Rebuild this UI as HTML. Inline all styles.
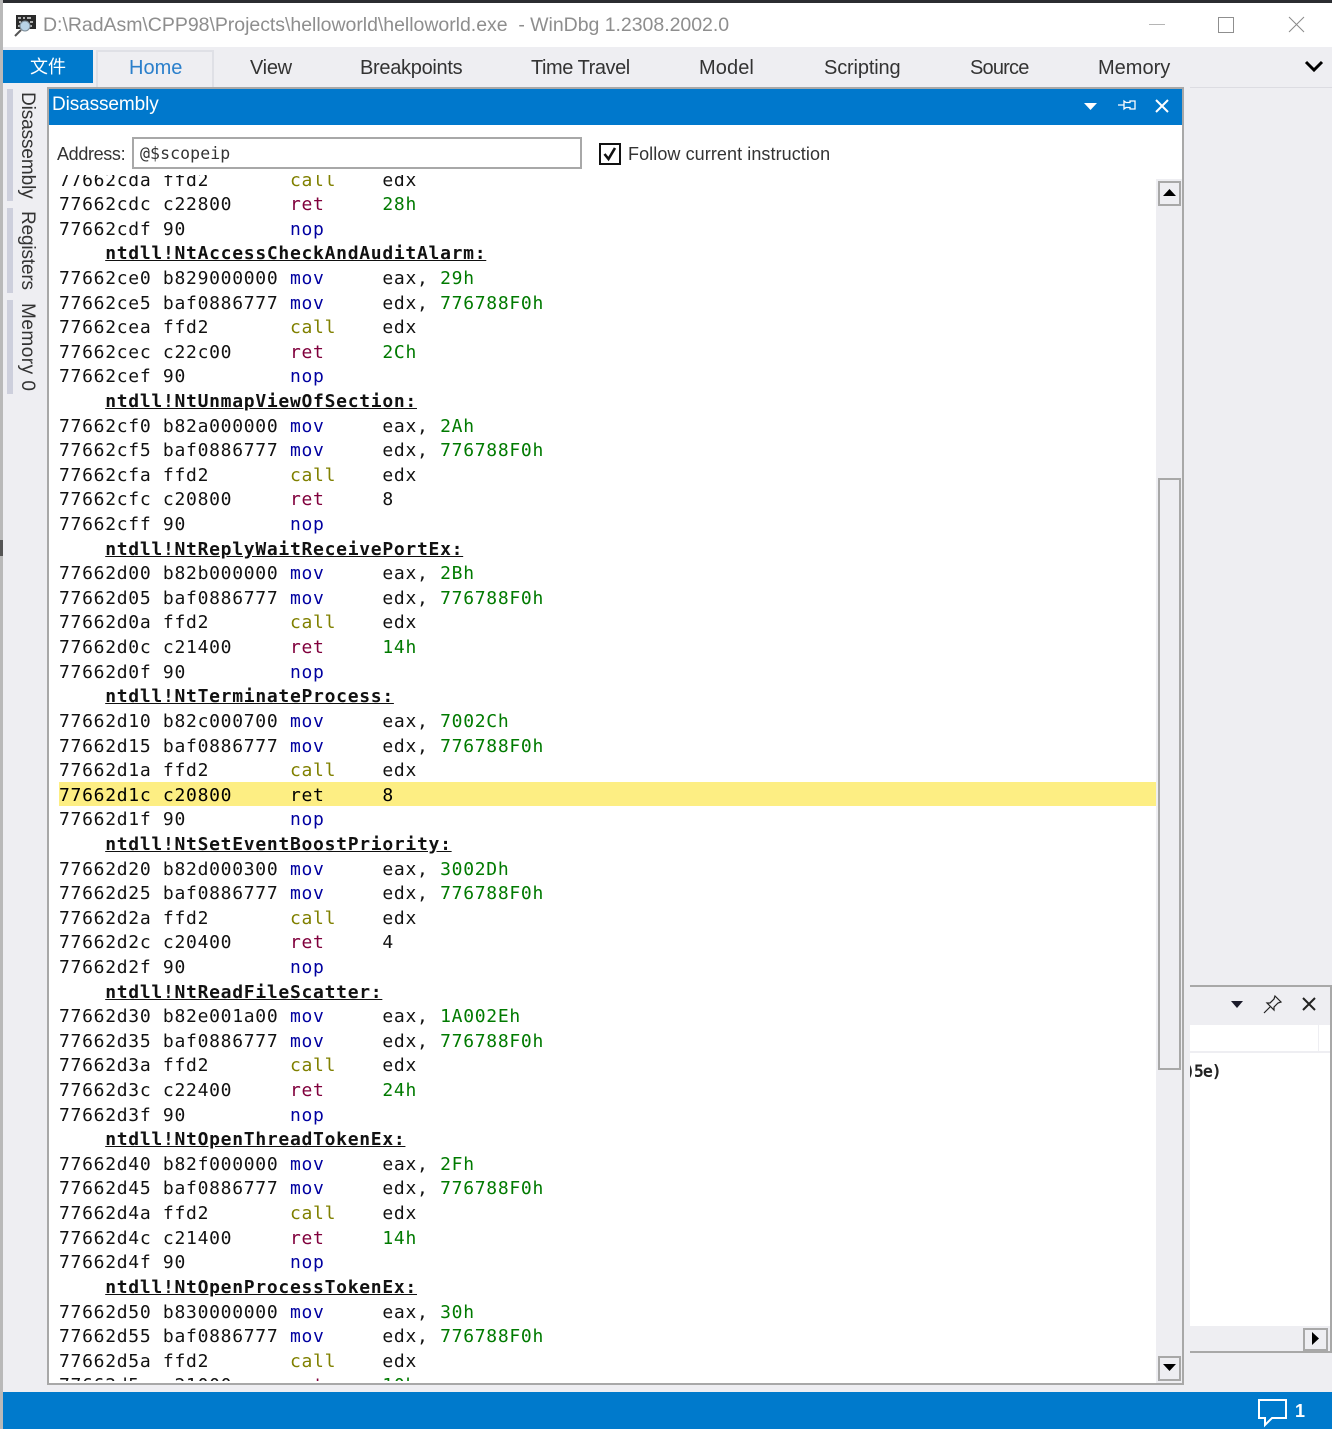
<!DOCTYPE html>
<html><head><meta charset="utf-8"><style>
html,body{margin:0;padding:0;background:#eeeef2}
body{width:1332px;height:1429px;position:relative;overflow:hidden;font-family:"Liberation Sans","Noto Sans CJK SC",sans-serif;color:#2b2b33}
.a{position:absolute;white-space:pre}
.t{font-size:20px;line-height:26px;top:55px;color:#333}
#code{position:absolute;left:49px;top:175px;width:1108px;height:1206px;overflow:hidden;background:#fff}
#in{position:absolute;left:10px;top:-6.5px;width:1098px;font:18px/24.62px "DejaVu Sans Mono",monospace;letter-spacing:.71px;color:#111}
#hl{position:absolute;left:10px;top:607px;width:1098px;height:24px;background:#fdee83}
#in div{height:24.62px;white-space:pre}
#in b{text-decoration:underline;color:#111}
.m{color:#0000a0}.c{color:#808000}.r{color:#80003c}.g{color:#007a00}
.v{writing-mode:vertical-rl;font-size:19px;color:#333;left:16px;line-height:22px}
.vb{position:absolute;left:7px;width:6px;background:#cdcfdc}
</style></head><body>
<div class="a" style="left:0;top:0;width:1332px;height:3px;background:#2b2d31"></div>
<div class="a" style="left:0;top:0;width:3px;height:1429px;background:#b9b9b9"></div>
<div class="a" style="left:0;top:540px;width:3px;height:16px;background:#555"></div>
<div class="a" style="left:3px;top:3px;width:1329px;height:44px;background:#fff"></div>
<svg class="a" style="left:14px;top:14px" width="24" height="24" viewBox="0 0 24 24"><rect x="2" y="1" width="20" height="14" fill="#2a2a2a"/><path d="M4 4h3M9 4h2M13 4h4M5 8h2M10 8h4M16 8h3M4 12h4M10 12h2M14 12h4" stroke="#ddd" stroke-width="1.5"/><circle cx="11" cy="12" r="5" fill="#b9d3e6" stroke="#7c8b96"/><path d="M7 16L1 22" stroke="#555" stroke-width="2"/></svg>
<div class="a" style="left:43px;top:12px;font-size:19.5px;line-height:26px;color:#8e8e8e;letter-spacing:-.03px">D:\RadAsm\CPP98\Projects\helloworld\helloworld.exe&nbsp; - WinDbg 1.2308.2002.0</div>
<div class="a" style="left:1149px;top:24px;width:16px;height:1px;background:#b5b5b5"></div>
<div class="a" style="left:1218px;top:17px;width:14px;height:14px;border:1px solid #8f8f8f"></div>
<svg class="a" style="left:1288px;top:16px" width="17" height="17"><path d="M1 1L16 16M16 1L1 16" stroke="#8a8a8a" fill="none"/></svg>

<div class="a" style="left:3px;top:50px;width:90px;height:33px;background:#007acc;color:#fff;font-size:18px;line-height:34px;text-align:center">文件</div>
<div class="a" style="left:96px;top:50px;width:114px;height:37px;border:2px solid #dfe0e6;border-bottom:0"></div>
<div class="a t" style="left:129px;color:#2a7fcb">Home</div>
<div class="a t" style="left:250px;letter-spacing:-.3px">View</div>
<div class="a t" style="left:360px;letter-spacing:-.3px">Breakpoints</div>
<div class="a t" style="left:531px;letter-spacing:-.45px">Time Travel</div>
<div class="a t" style="left:699px;letter-spacing:.1px">Model</div>
<div class="a t" style="left:824px;letter-spacing:-.15px">Scripting</div>
<div class="a t" style="left:970px;letter-spacing:-.8px">Source</div>
<div class="a t" style="left:1098px">Memory</div>
<svg class="a" style="left:1304px;top:60px" width="20" height="14"><path d="M2 2L10 10L18 2" stroke="#000" stroke-width="3" fill="none"/></svg>
<div class="a" style="left:1190px;top:87px;width:142px;height:1px;background:#dcdce2"></div>

<div class="vb" style="top:89px;height:112px"></div>
<div class="vb" style="top:208px;height:85px"></div>
<div class="vb" style="top:300px;height:94px"></div>
<div class="a v" style="top:92px;letter-spacing:-.1px">Disassembly</div>
<div class="a v" style="top:211px;letter-spacing:-.15px">Registers</div>
<div class="a v" style="top:303px;letter-spacing:.5px">Memory 0</div>

<div class="a" style="left:47px;top:87px;width:1137px;height:1298px;box-sizing:border-box;border:2px solid #a8a8a8;background:#fff"></div>
<div class="a" style="left:49px;top:89px;width:1133px;height:36px;background:#0078cc"></div>
<div class="a" style="left:52px;top:91px;color:#fff;font-size:19px;line-height:28px;letter-spacing:-.1px">Disassembly</div>
<svg class="a" style="left:1084px;top:103px" width="13" height="8"><path d="M0 0H13L6.5 7Z" fill="#fff"/></svg>
<svg class="a" style="left:1117px;top:98px" width="20" height="14"><path d="M1 7H7M7 3V11L9 9.5H13V11H18V3H13V4.5H9Z" stroke="#fff" stroke-width="1.3" fill="none"/></svg>
<svg class="a" style="left:1155px;top:99px" width="14" height="14"><path d="M1 1L13 13M13 1L1 13" stroke="#fff" stroke-width="2" fill="none"/></svg>

<div class="a" style="left:57px;top:141px;font-size:18px;line-height:26px;color:#333;letter-spacing:-.35px">Address:</div>
<div class="a" style="left:132px;top:137px;width:440px;height:28px;border:2px solid #a8a8a8;font:16.5px/29px 'DejaVu Sans Mono',monospace;color:#333;padding-left:6px;letter-spacing:.1px">@$scopeip</div>
<div class="a" style="left:599px;top:143px;width:18px;height:18px;border:2px solid #111"></div>
<svg class="a" style="left:601px;top:145px" width="18" height="18"><path d="M3.5 9L7.5 14L14 3" stroke="#111" stroke-width="2.6" fill="none"/></svg>
<div class="a" style="left:628px;top:141px;font-size:18px;line-height:26px;color:#333;letter-spacing:.08px">Follow current instruction</div>

<div id="code"><div id="hl"></div><div id="in"><div>77662cda ffd2       <span class="c">call</span>    edx</div><div>77662cdc c22800     <span class="r">ret</span>     <span class="g">28h</span></div><div>77662cdf 90         <span class="m">nop</span></div><div>    <b>ntdll!NtAccessCheckAndAuditAlarm:</b></div><div>77662ce0 b829000000 <span class="m">mov</span>     eax, <span class="g">29h</span></div><div>77662ce5 baf0886777 <span class="m">mov</span>     edx, <span class="g">776788F0h</span></div><div>77662cea ffd2       <span class="c">call</span>    edx</div><div>77662cec c22c00     <span class="r">ret</span>     <span class="g">2Ch</span></div><div>77662cef 90         <span class="m">nop</span></div><div>    <b>ntdll!NtUnmapViewOfSection:</b></div><div>77662cf0 b82a000000 <span class="m">mov</span>     eax, <span class="g">2Ah</span></div><div>77662cf5 baf0886777 <span class="m">mov</span>     edx, <span class="g">776788F0h</span></div><div>77662cfa ffd2       <span class="c">call</span>    edx</div><div>77662cfc c20800     <span class="r">ret</span>     8</div><div>77662cff 90         <span class="m">nop</span></div><div>    <b>ntdll!NtReplyWaitReceivePortEx:</b></div><div>77662d00 b82b000000 <span class="m">mov</span>     eax, <span class="g">2Bh</span></div><div>77662d05 baf0886777 <span class="m">mov</span>     edx, <span class="g">776788F0h</span></div><div>77662d0a ffd2       <span class="c">call</span>    edx</div><div>77662d0c c21400     <span class="r">ret</span>     <span class="g">14h</span></div><div>77662d0f 90         <span class="m">nop</span></div><div>    <b>ntdll!NtTerminateProcess:</b></div><div>77662d10 b82c000700 <span class="m">mov</span>     eax, <span class="g">7002Ch</span></div><div>77662d15 baf0886777 <span class="m">mov</span>     edx, <span class="g">776788F0h</span></div><div>77662d1a ffd2       <span class="c">call</span>    edx</div><div style="color:#000">77662d1c c20800     ret     8</div><div>77662d1f 90         <span class="m">nop</span></div><div>    <b>ntdll!NtSetEventBoostPriority:</b></div><div>77662d20 b82d000300 <span class="m">mov</span>     eax, <span class="g">3002Dh</span></div><div>77662d25 baf0886777 <span class="m">mov</span>     edx, <span class="g">776788F0h</span></div><div>77662d2a ffd2       <span class="c">call</span>    edx</div><div>77662d2c c20400     <span class="r">ret</span>     4</div><div>77662d2f 90         <span class="m">nop</span></div><div>    <b>ntdll!NtReadFileScatter:</b></div><div>77662d30 b82e001a00 <span class="m">mov</span>     eax, <span class="g">1A002Eh</span></div><div>77662d35 baf0886777 <span class="m">mov</span>     edx, <span class="g">776788F0h</span></div><div>77662d3a ffd2       <span class="c">call</span>    edx</div><div>77662d3c c22400     <span class="r">ret</span>     <span class="g">24h</span></div><div>77662d3f 90         <span class="m">nop</span></div><div>    <b>ntdll!NtOpenThreadTokenEx:</b></div><div>77662d40 b82f000000 <span class="m">mov</span>     eax, <span class="g">2Fh</span></div><div>77662d45 baf0886777 <span class="m">mov</span>     edx, <span class="g">776788F0h</span></div><div>77662d4a ffd2       <span class="c">call</span>    edx</div><div>77662d4c c21400     <span class="r">ret</span>     <span class="g">14h</span></div><div>77662d4f 90         <span class="m">nop</span></div><div>    <b>ntdll!NtOpenProcessTokenEx:</b></div><div>77662d50 b830000000 <span class="m">mov</span>     eax, <span class="g">30h</span></div><div>77662d55 baf0886777 <span class="m">mov</span>     edx, <span class="g">776788F0h</span></div><div>77662d5a ffd2       <span class="c">call</span>    edx</div><div>77662d5c c21000     <span class="r">ret</span>     <span class="g">10h</span></div></div></div>

<div class="a" style="left:1156px;top:179px;width:26px;height:1204px;background:#eeeef2"></div>
<div class="a" style="left:1158px;top:181px;width:19px;height:21px;border:2px solid #a8a8a8"></div>
<svg class="a" style="left:1163px;top:189px" width="13" height="8"><path d="M0 7H13L6.5 0Z" fill="#000"/></svg>
<div class="a" style="left:1158px;top:478px;width:19px;height:588px;border:2px solid #a8a8a8"></div>
<div class="a" style="left:1158px;top:1356px;width:19px;height:21px;border:2px solid #a8a8a8"></div>
<svg class="a" style="left:1163px;top:1364px" width="13" height="8"><path d="M0 0H13L6.5 7Z" fill="#000"/></svg>

<div class="a" style="left:1190px;top:985px;width:140px;height:368px;background:#eeeef2;border-top:2px solid #a8a8a8;border-bottom:2px solid #a8a8a8;box-sizing:border-box"></div>
<div class="a" style="left:1330px;top:985px;width:2px;height:368px;background:#a8a8a8"></div>
<div class="a" style="left:1190px;top:1025px;width:128px;height:26px;background:#fff"></div>
<div class="a" style="left:1319px;top:1025px;width:11px;height:26px;background:#fff"></div>
<div class="a" style="left:1190px;top:1053px;width:140px;height:273px;background:#fff"></div>
<div class="a" style="left:1190px;top:1061px;width:40px;height:22px;overflow:hidden;font:bold 16.5px/22px 'DejaVu Sans Mono','Liberation Sans',sans-serif;color:#222;letter-spacing:-1px"><span style="margin-left:-5px">)5e)</span></div>
<svg class="a" style="left:1231px;top:1001px" width="12" height="8"><path d="M0 0H12L6 7Z" fill="#1a1a2a"/></svg>
<svg class="a" style="left:1263px;top:994px" width="20" height="20"><path d="M12 2L18 8L15 9L11 13L11 16L4 9L7 9L11 5ZM7 13L1 19" stroke="#222" stroke-width="1.2" fill="none"/></svg>
<svg class="a" style="left:1302px;top:997px" width="14" height="14"><path d="M1 1L13 13M13 1L1 13" stroke="#222" stroke-width="2" fill="none"/></svg>
<div class="a" style="left:1303px;top:1328px;width:21px;height:19px;border:2px solid #a8a8a8"></div>
<svg class="a" style="left:1312px;top:1332px" width="8" height="13"><path d="M0 0V13L7 6.5Z" fill="#000"/></svg>

<div class="a" style="left:3px;top:1392px;width:1329px;height:37px;background:#007acc"></div>
<svg class="a" style="left:1257px;top:1398px" width="32" height="30"><path d="M2 2H29V20H15L8 27V20H2Z" stroke="#fff" stroke-width="2" fill="#007acc"/></svg>
<div class="a" style="left:1295px;top:1398px;color:#fff;font-size:18px;font-weight:bold;line-height:26px">1</div>
</body></html>
